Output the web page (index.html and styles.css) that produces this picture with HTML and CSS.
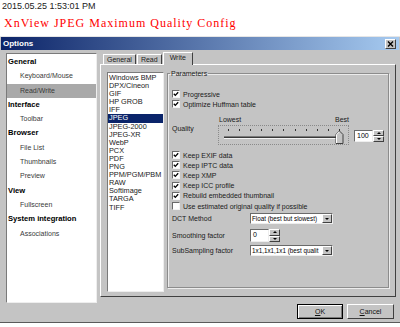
FILE: index.html
```html
<!DOCTYPE html>
<html>
<head>
    <title>XnView JPEG Maximum Quality Config</title>
    <link rel="stylesheet" href="styles.css">
</head>
<body>
    <div class="stamp">2015.05.25 1:53:01 PM</div>
    <h1 class="heading">XnView JPEG Maximum Quality Config</h1>

    <div class="window">
        <div class="titlebar">
            <span class="caption">Options</span>
            <span class="close">
                <svg width="7" height="6" viewBox="0 0 7 6"><path d="M1 0.5 L6 5.5 M6 0.5 L1 5.5" stroke="#000" stroke-width="1.4"/></svg>
            </span>
        </div>

        <div class="content">
            <ul class="tree">
                <li class="node">General</li>
                <li class="leaf">Keyboard/Mouse</li>
                <li class="leaf selected">Read/Write</li>
                <li class="node">Interface</li>
                <li class="leaf">Toolbar</li>
                <li class="node">Browser</li>
                <li class="leaf">File List</li>
                <li class="leaf">Thumbnails</li>
                <li class="leaf">Preview</li>
                <li class="node">View</li>
                <li class="leaf">Fullscreen</li>
                <li class="node">System integration</li>
                <li class="leaf">Associations</li>
            </ul>

            <div class="side">
                <div class="tabs">
                    <span class="tab">General</span>
                    <span class="tab">Read</span>
                    <span class="tab active">Write</span>
                </div>

                <div class="panel">
                    <ul class="formats">
                        <li>Windows BMP</li>
                        <li>DPX/Cineon</li>
                        <li>GIF</li>
                        <li>HP GROB</li>
                        <li>IFF</li>
                        <li class="selected">JPEG</li>
                        <li>JPEG-2000</li>
                        <li>JPEG-XR</li>
                        <li>WebP</li>
                        <li>PCX</li>
                        <li>PDF</li>
                        <li>PNG</li>
                        <li>PPM/PGM/PBM</li>
                        <li>RAW</li>
                        <li>Softimage</li>
                        <li>TARGA</li>
                        <li>TIFF</li>
                    </ul>

                    <fieldset class="params">
                        <legend>Parameters</legend>

                        <div class="checks first">
                            <div class="check"><span class="box on"><svg width="6" height="6" viewBox="0 0 6 6"><path d="M0.8 2.8 L2.3 4.4 L5.2 1.2" fill="none" stroke="#000" stroke-width="1.3"/></svg></span>Progressive</div>
                            <div class="check"><span class="box on"><svg width="6" height="6" viewBox="0 0 6 6"><path d="M0.8 2.8 L2.3 4.4 L5.2 1.2" fill="none" stroke="#000" stroke-width="1.3"/></svg></span>Optimize Huffman table</div>
                        </div>

                        <div class="quality">
                            <span class="quality-label">Quality</span>
                            <div class="slider">
                                <div class="scale"><span>Lowest</span><span>Best</span></div>
                                <div class="track">
                                    <svg width="129" height="18" viewBox="0 0 129 18">
                                        <g fill="#333">
                                            <rect x="9" y="3" width="1" height="2"/>
                                            <rect x="20" y="3" width="1" height="2"/>
                                            <rect x="31" y="3" width="1" height="2"/>
                                            <rect x="42" y="3" width="1" height="2"/>
                                            <rect x="53" y="3" width="1" height="2"/>
                                            <rect x="64" y="3" width="1" height="2"/>
                                            <rect x="76" y="3" width="1" height="2"/>
                                            <rect x="87" y="3" width="1" height="2"/>
                                            <rect x="98" y="3" width="1" height="2"/>
                                            <rect x="109" y="3" width="1" height="2"/>
                                            <rect x="120" y="3" width="1" height="2"/>
                                        </g>
                                        <rect x="5" y="10" width="118" height="1" fill="#7a7a7a"/>
                                        <rect x="5" y="11" width="118" height="1" fill="#3a3a3a"/>
                                        <rect x="5" y="12" width="118" height="1" fill="#f4f4f4"/>
                                        <path d="M117 17.5 L117 8.5 L120.5 5 L124 8.5 L124 17.5 Z" fill="#c4c4c4" stroke="#404040" stroke-width="1"/>
                                        <path d="M117.5 17 L117.5 8.7 L120.5 5.7" fill="none" stroke="#fff" stroke-width="1"/>
                                    </svg>
                                </div>
                            </div>
                            <div class="spin wide">
                                <span class="spin-value">100</span>
                                <span class="spin-arrows"><span class="arrow up"></span><span class="arrow down"></span></span>
                            </div>
                        </div>

                        <div class="checks">
                            <div class="check"><span class="box on"><svg width="6" height="6" viewBox="0 0 6 6"><path d="M0.8 2.8 L2.3 4.4 L5.2 1.2" fill="none" stroke="#000" stroke-width="1.3"/></svg></span>Keep EXIF data</div>
                            <div class="check"><span class="box on"><svg width="6" height="6" viewBox="0 0 6 6"><path d="M0.8 2.8 L2.3 4.4 L5.2 1.2" fill="none" stroke="#000" stroke-width="1.3"/></svg></span>Keep IPTC data</div>
                            <div class="check"><span class="box on"><svg width="6" height="6" viewBox="0 0 6 6"><path d="M0.8 2.8 L2.3 4.4 L5.2 1.2" fill="none" stroke="#000" stroke-width="1.3"/></svg></span>Keep XMP</div>
                            <div class="check"><span class="box on"><svg width="6" height="6" viewBox="0 0 6 6"><path d="M0.8 2.8 L2.3 4.4 L5.2 1.2" fill="none" stroke="#000" stroke-width="1.3"/></svg></span>Keep ICC profile</div>
                            <div class="check"><span class="box on"><svg width="6" height="6" viewBox="0 0 6 6"><path d="M0.8 2.8 L2.3 4.4 L5.2 1.2" fill="none" stroke="#000" stroke-width="1.3"/></svg></span>Rebuild embedded thumbnail</div>
                            <div class="check"><span class="box"></span>Use estimated original quality if possible</div>
                        </div>

                        <div class="field dct">
                            <span class="field-label">DCT Method</span>
                            <div class="combo"><span class="combo-value">Float (best but slowest)</span><span class="combo-button"><span class="arrow down"></span></span></div>
                        </div>
                        <div class="field smooth">
                            <span class="field-label">Smoothing factor</span>
                            <div class="spin">
                                <span class="spin-value">0</span>
                                <span class="spin-arrows"><span class="arrow up"></span><span class="arrow down"></span></span>
                            </div>
                        </div>
                        <div class="field sub">
                            <span class="field-label">SubSampling factor</span>
                            <div class="combo"><span class="combo-value">1x1,1x1,1x1 (best qualit</span><span class="combo-button"><span class="arrow down"></span></span></div>
                        </div>
                    </fieldset>
                </div>

                <div class="actions">
                    <button class="default"><u>O</u>K</button>
                    <button><u>C</u>ancel</button>
                </div>
            </div>
        </div>
    </div>
</body>
</html>
```

FILE: styles.css
```css
body {
    margin: 0;
    background: #fff;
    font-family: "Liberation Sans", Arial, sans-serif;
}

.stamp {
    padding-left: 2px;
    font-size: 9px;
    line-height: 13px;
    color: #222;
}

.heading {
    margin: 0;
    padding-left: 4px;
    font-family: "Liberation Serif", "Times New Roman", serif;
    font-weight: normal;
    font-size: 12px;
    letter-spacing: 1px;
    line-height: 21px;
    color: #f00;
}

.window {
    margin-top: 2px;
    border-top: 1px solid #e6e6e6;
    border-bottom: 1px solid #5a5a5a;
    box-shadow: 0 5px 0 #a4a4a4;
    background: #c4c4c4;
    font-size: 7px;
    color: #1a1a1a;
}

/* title bar */
.titlebar {
    display: flex;
    align-items: center;
    justify-content: space-between;
    height: 13px;
    margin: 0 1px;
    padding: 0 3px 0 2px;
    background: linear-gradient(to right, #0c2468, #a6caf0);
}

.caption {
    font-weight: bold;
    font-size: 8px;
    color: #fff;
}

.close {
    display: flex;
    align-items: center;
    justify-content: center;
    width: 11px;
    height: 10px;
    box-sizing: border-box;
    background: #c4c4c4;
    border: 1px solid;
    border-color: #fff #404040 #404040 #fff;
}

/* main area */
.content {
    display: flex;
    gap: 3px;
    padding: 2px 4px 3px 6px;
}

.tree {
    list-style: none;
    margin: 1px 0 0;
    padding: 1px 0 0;
    width: 94px;
    height: 250px;
    box-sizing: border-box;
    background: #fff;
    border: 1px solid;
    border-color: #7a7a7a #eee #eee #7a7a7a;
}

.tree li {
    height: 14.3px;
    line-height: 14.3px;
    white-space: nowrap;
}

.node {
    padding-left: 1px;
    font-weight: bold;
    font-size: 7.6px;
    color: #000;
}

.leaf {
    padding-left: 13px;
    color: #3a3a3a;
}

.tree .selected {
    background: #a9a9a9;
}

.side {
    flex: 1;
    display: flex;
    flex-direction: column;
}

/* tabs */
.tabs {
    display: flex;
    align-items: flex-end;
    height: 12px;
    padding-left: 3px;
}

.tab {
    height: 10px;
    line-height: 10px;
    padding: 0 3px;
    box-sizing: border-box;
    border: 1px solid;
    border-bottom: none;
    border-color: #fff #404040 #404040 #fff;
    color: #222;
}

.tab + .tab {
    margin-left: 1px;
}

.tab.active {
    position: relative;
    height: 13px;
    margin-bottom: -1px;
    padding: 0 6px;
    background: #c4c4c4;
}

.panel {
    display: flex;
    align-items: flex-start;
    gap: 3px;
    height: 233px;
    box-sizing: border-box;
    padding: 7px 6px 0;
    border: 1px solid;
    border-color: #fff #404040 #404040 #fff;
}

/* formats list */
.formats {
    list-style: none;
    margin: 0;
    padding: 1px 0 0;
    width: 57px;
    height: 220px;
    box-sizing: border-box;
    background: #fff;
    border: 1px solid;
    border-color: #7a7a7a #eee #eee #7a7a7a;
    font-size: 7.3px;
    color: #222;
}

.formats li {
    height: 8.1px;
    line-height: 8.1px;
    padding-left: 1px;
    white-space: nowrap;
}

.formats .selected {
    background: #0a246a;
    color: #fff;
}

/* parameters group */
.params {
    margin: -3px 0 0;
    padding: 0 4px;
    width: 219px;
    height: 219px;
    box-sizing: border-box;
    border: 1px solid #8c8c8c;
    box-shadow: inset 1px 1px #ececec, 1px 1px #ececec;
}

.params legend {
    padding: 0 1px;
    margin-left: -2px;
    line-height: 9px;
    color: #222;
}

.checks.first {
    margin-top: 11px;
}

.check {
    display: flex;
    align-items: center;
    gap: 3px;
    height: 10.2px;
    white-space: nowrap;
}

.checks.first .check {
    height: 10px;
}

.box {
    display: flex;
    align-items: center;
    justify-content: center;
    width: 8px;
    height: 8px;
    box-sizing: border-box;
    background: #fff;
    border: 1px solid;
    border-color: #6a6a6a #f4f4f4 #f4f4f4 #6a6a6a;
}

.quality {
    display: flex;
    align-items: flex-start;
    margin-top: 6px;
    margin-bottom: 5px;
}

.quality-label {
    width: 46px;
    margin-top: 9px;
    line-height: 10px;
}

.slider {
    width: 131px;
}

.scale {
    display: flex;
    justify-content: space-between;
    height: 10px;
    line-height: 10px;
    padding: 0 0 0 1px;
}

.track {
    height: 20px;
    box-sizing: border-box;
    border: 1px dotted #8a8a8a;
}

.track svg {
    display: block;
}

/* spinners */
.spin {
    display: flex;
    width: 30px;
    height: 13px;
}

.spin.wide {
    margin-top: 15px;
    margin-left: 5px;
    height: 12px;
}

.spin-value {
    flex: 1;
    padding-left: 2px;
    background: #fff;
    border: 1px solid;
    border-color: #6a6a6a #eee #eee #6a6a6a;
    line-height: 10px;
    color: #000;
}

.spin.wide .spin-value {
    line-height: 9px;
}

.spin-arrows {
    display: flex;
    flex-direction: column;
    width: 11px;
}

.spin-arrows .arrow {
    flex: 1;
    box-sizing: border-box;
    border: 1px solid;
    border-color: #fff #404040 #404040 #fff;
    background: #c4c4c4;
    position: relative;
}

.arrow::after {
    content: "";
    position: absolute;
    left: 50%;
    top: 50%;
    margin: -1px 0 0 -2px;
    border-left: 2px solid transparent;
    border-right: 2px solid transparent;
}

.arrow.up::after {
    border-bottom: 2px solid #000;
}

.arrow.down::after {
    border-top: 2px solid #000;
}

/* fields */
.field {
    display: flex;
    align-items: center;
}

.field-label {
    width: 78px;
}

.dct {
    margin-top: 2px;
}

.smooth {
    margin-top: 5px;
}

.sub {
    margin-top: 3px;
}

.combo {
    display: flex;
    width: 83px;
    height: 11px;
    box-sizing: border-box;
    background: #fff;
    border: 1px solid;
    border-color: #6a6a6a #eee #eee #6a6a6a;
}

.combo-value {
    flex: 1;
    overflow: hidden;
    white-space: nowrap;
    padding-left: 1px;
    font-size: 6.3px;
    line-height: 9px;
    color: #000;
}

.combo-button {
    display: flex;
    width: 10px;
    box-sizing: border-box;
}

.combo-button .arrow {
    flex: 1;
    position: relative;
    box-sizing: border-box;
    border: 1px solid;
    border-color: #fff #404040 #404040 #fff;
    background: #c4c4c4;
}

/* buttons */
.actions {
    display: flex;
    justify-content: flex-end;
    gap: 4px;
    margin-top: 7px;
    padding-right: 2px;
}

.actions button {
    width: 47px;
    height: 15px;
    padding: 0;
    font-family: inherit;
    font-size: 7px;
    color: #111;
    background: #c4c4c4;
    border: 1px solid;
    border-color: #fff #404040 #404040 #fff;
}

.actions .default {
    width: 46px;
    border-color: #000;
    box-shadow: inset 1px 1px #fff, inset -1px -1px #7a7a7a;
}
```
